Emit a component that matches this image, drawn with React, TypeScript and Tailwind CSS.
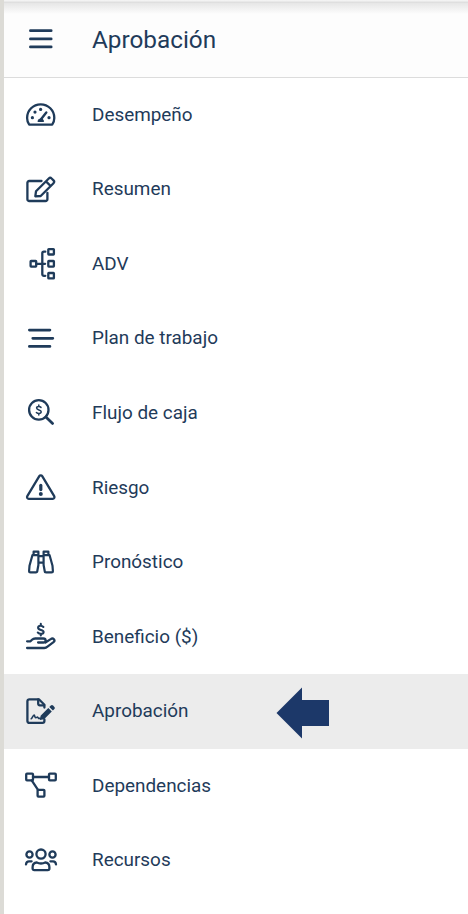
import React from 'react';

interface NavItem {
    label: string;
    icon: React.ReactNode;
    active?: boolean;
}

const MenuIcon = () => (
    <path d="M7.4 8.7h20.8M7.4 16.9h20.8M7.4 24.9h20.8" strokeWidth="2.7" />
);

const GaugeIcon = () => (
    <>
        <path d="M6.2 27.6h23c1.4-2 2.1-4.3 2.1-6.7C31.3 13.3 25.2 7.4 17.7 7.4S4.1 13.3 4.1 20.9c0 2.4.7 4.7 2.1 6.7z" />
        <path d="M18 22.2l5.3-6.8" strokeWidth="2.4" />
        <path
            d="M15.2 24.2a2.7 2.7 0 0 1 5.2 0z"
            fill="currentColor"
            strokeWidth="1.4"
        />
        <g fill="currentColor" stroke="none">
            <circle cx="17.6" cy="12.4" r="1.6" />
            <circle cx="12" cy="15.1" r="1.6" />
            <circle cx="9.4" cy="20.7" r="1.6" />
            <circle cx="26" cy="20.7" r="1.6" />
        </g>
    </>
);

const EditIcon = () => (
    <>
        <path d="M18.5 9H6.2a1.8 1.8 0 0 0-1.8 1.8v16.4A1.8 1.8 0 0 0 6.2 29h16.4a1.8 1.8 0 0 0 1.8-1.8v-6.4" />
        <path d="M12.3 24.3l.7-5L25.8 6.5a2 2 0 0 1 2.8 0l1.9 1.9a2 2 0 0 1 0 2.8L17.7 24l-5.4.3zM23 9.4l4.6 4.6" />
    </>
);

const TreeIcon = () => (
    <>
        <rect x="7.6" y="15" width="5.6" height="5.6" rx=".5" />
        <rect x="25.3" y="3.1" width="5.6" height="5.4" rx=".5" />
        <rect x="25.3" y="15" width="5.6" height="5.6" rx=".5" />
        <rect x="25.3" y="27" width="5.6" height="5.4" rx=".5" />
        <path d="M22.3 5.7h-1.4a1.6 1.6 0 0 0-1.6 1.6v20.9a1.6 1.6 0 0 0 1.6 1.6h1.4M13.4 17.8h8.7" />
    </>
);

const PlanIcon = () => (
    <path d="M6.4 9.1h20.5M9.8 17.3h20M6.4 25.4h20.5" strokeWidth="2.8" />
);

const CashSearchIcon = () => (
    <>
        <circle cx="15.8" cy="14.9" r="9.7" />
        <path d="M22.9 22l6.7 6.4" strokeWidth="2.8" />
        <path
            d="M18 12.4c-.6-.6-1.3-.9-2.2-.9-1.2 0-2.2.6-2.2 1.6 0 2.4 4.6 1.3 4.6 3.7 0 1-1 1.7-2.3 1.7-1 0-1.9-.4-2.5-1M15.8 10v1.4M15.8 18.6V20"
            strokeWidth="1.5"
        />
    </>
);

const RiskIcon = () => (
    <>
        <path d="M16.3 6.1a1.7 1.7 0 0 1 2.9 0l12 20.1a1.7 1.7 0 0 1-1.5 2.6H5.8a1.7 1.7 0 0 1-1.5-2.6z" />
        <path d="M17.8 15.4v4.2" strokeWidth="3.2" />
        <circle cx="17.8" cy="24" r="2" fill="currentColor" stroke="none" />
    </>
);

const BinocularsIcon = () => (
    <path
        d="M10.6 10.2V6.7h4.8v3.5H9.4L6.5 20.8 6.1 26a1.4 1.4 0 0 0 1.4 1.4h5.4a1.4 1.4 0 0 0 1.4-1.4l1.1-6v-9.8M25.4 10.2V6.7h-4.8v3.5h6l2.9 10.6.4 5.2a1.4 1.4 0 0 1-1.4 1.4h-5.4a1.4 1.4 0 0 1-1.4-1.4l-1.1-6v-9.8M15.4 11.2h5.2M15.4 17.6h5.2"
        strokeWidth="2.2"
    />
);

const BenefitIcon = () => (
    <>
        <path
            d="M20.4 8c-.7-.8-1.6-1.2-2.7-1.2-1.5 0-2.6.7-2.6 1.9 0 2.9 5.5 1.5 5.5 4.2 0 1.2-1.2 1.9-2.8 1.9-1.2 0-2.3-.5-3-1.2M17.8 4.9v1.8M17.8 14.9v1.6"
            strokeWidth="2.1"
        />
        <path d="M4.1 22.3h3.4l1.5-1.5a4.6 4.6 0 0 1 3.2-1.3h8.1c1.4 0 2.3.9 2.3 2s-.9 2-2.3 2h-5.2M22.4 23.5l5.3-3.4c1.3-.9 2.4-.7 3.2.1.8 1 .6 2.2-.4 3l-6 4.5a5.4 5.4 0 0 1-3.3 1.3H4.1" />
    </>
);

const SignatureIcon = () => (
    <>
        <path d="M21.4 13.5v-2.7l-5.5-5.5H6.3a1.9 1.9 0 0 0-1.9 1.9V27a1.9 1.9 0 0 0 1.9 1.9h13.2a1.9 1.9 0 0 0 1.9-1.9v-1.6" />
        <path d="M15.2 5.5v4.3a1.5 1.5 0 0 0 1.5 1.5h4.4" />
        <path
            d="M8.2 24.7c1.2-.4 1.5-2.9 2.8-3.6 1 .4.7 2.6 1.9 2.6.9 0 1-.8 1.8-.5l1 1.2h1.6"
            strokeWidth="1.6"
        />
        <path
            d="M16.9 25.9l.7-4.2 7.7-7.7 3.5 3.5-7.7 7.7zM26.3 13l1.5-1.4a1.6 1.6 0 0 1 2.3 0l1.3 1.3a1.6 1.6 0 0 1 0 2.2L29.9 16.5z"
            fill="currentColor"
            stroke="none"
        />
    </>
);

const DependencyIcon = () => (
    <>
        <rect x="3.2" y="5.6" width="6.8" height="6.8" rx=".8" />
        <rect x="26" y="5.6" width="6.8" height="6.8" rx=".8" />
        <rect x="14.6" y="21.8" width="6.8" height="6.8" rx=".8" />
        <path d="M10 9h16M8.7 12.4l6.3 9.4" />
    </>
);

const TeamIcon = () => (
    <>
        <circle cx="18" cy="11.1" r="4.6" />
        <circle cx="6.5" cy="11.5" r="3.1" />
        <circle cx="29.5" cy="11.5" r="3.1" />
        <path d="M13.8 19.5c-2.5.2-4.2 2.2-4.2 4.7v1.4a1.6 1.6 0 0 0 1.6 1.6h13.6a1.6 1.6 0 0 0 1.6-1.6v-1.4c0-2.5-1.7-4.5-4.2-4.7-1.5.8-2.8 1-4.2 1s-2.7-.2-4.2-1zM3 21.3c.2-1.9 1.3-3 3-3h2.6M33 21.3c-.2-1.9-1.3-3-3-3h-2.6" />
    </>
);

const Icon: React.FC<{ children: React.ReactNode }> = ({ children }) => (
    <svg
        viewBox="0 0 36 36"
        className="h-9 w-9 shrink-0"
        fill="none"
        stroke="currentColor"
        strokeWidth="2.3"
        strokeLinecap="round"
        strokeLinejoin="round"
        aria-hidden="true"
    >
        {children}
    </svg>
);

const items: NavItem[] = [
    { label: 'Desempeño', icon: <GaugeIcon /> },
    { label: 'Resumen', icon: <EditIcon /> },
    { label: 'ADV', icon: <TreeIcon /> },
    { label: 'Plan de trabajo', icon: <PlanIcon /> },
    { label: 'Flujo de caja', icon: <CashSearchIcon /> },
    { label: 'Riesgo', icon: <RiskIcon /> },
    { label: 'Pronóstico', icon: <BinocularsIcon /> },
    { label: 'Beneficio ($)', icon: <BenefitIcon /> },
    { label: 'Aprobación', icon: <SignatureIcon />, active: true },
    { label: 'Dependencias', icon: <DependencyIcon /> },
    { label: 'Recursos', icon: <TeamIcon /> },
];

const App: React.FC = () => (
    <div className="flex h-[914px] w-[468px] flex-col overflow-hidden border-l-4 border-[#dcdbd6] bg-white font-[Roboto,sans-serif] text-[#1f3b5a]">
        <header className="flex h-[78px] shrink-0 flex-col border-b border-[#dcdcdc]">
            <div className="h-[3px] shrink-0 bg-linear-to-b from-[#f8f8f8] to-[#dadada]" />
            <div className="flex flex-1 items-center bg-linear-to-b from-[#e6e6e6] via-[#fdfdfd] via-15% to-[#fdfdfd] pl-[19px]">
                <button aria-label="Menú" className="h-9">
                    <Icon>
                        <MenuIcon />
                    </Icon>
                </button>
                <h1 className="ml-[33px] text-[24.3px] leading-none">Aprobación</h1>
            </div>
        </header>

        <nav>
            <ul>
                {items.map((item) => (
                    <li
                        key={item.label}
                        className={`flex h-[74.55px] items-center pl-[19px] ${
                            item.active ? 'bg-[#ececec]' : ''
                        }`}
                    >
                        <Icon>{item.icon}</Icon>
                        <span className="ml-[33px] text-[18.9px] leading-none">
                            {item.label}
                        </span>
                        {item.active && (
                            <svg
                                viewBox="0 0 53 52"
                                className="mt-[3px] ml-auto mr-[139px] h-[52px] w-[53px]"
                                aria-hidden="true"
                            >
                                <path
                                    d="M.5 26L26 .5V13h27v26H26v12.5z"
                                    fill="#1c3869"
                                />
                            </svg>
                        )}
                    </li>
                ))}
            </ul>
        </nav>
    </div>
);

export default App;
